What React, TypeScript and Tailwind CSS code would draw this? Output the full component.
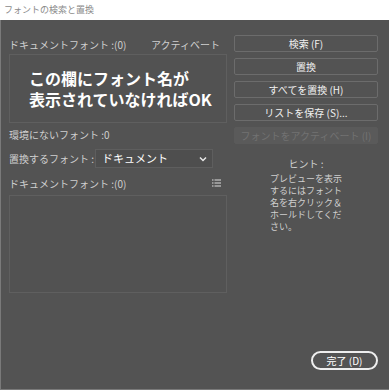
import React from 'react';

const font = { fontFamily: '"Noto Sans CJK JP", "Noto Sans", sans-serif' };

function SideButton({ label, disabled }: { label: string; disabled?: boolean }) {
  return (
    <button
      className={
        disabled
          ? 'h-[17px] w-full whitespace-nowrap rounded-[2px] border border-[#5a5a5a] bg-[#5a5a5a] text-[10px] leading-none text-[#727272]'
          : 'h-[17px] w-full whitespace-nowrap rounded-[2px] border border-[#6c6c6c] bg-[#535353] text-[10px] leading-none text-[#f0f0f0]'
      }
    >
      {label}
    </button>
  );
}

export default function App() {
  return (
    <div className="flex h-[390px] w-[389px] flex-col bg-[#535353]" style={font}>
      {/* Title bar */}
      <div className="flex h-[20px] items-center bg-white px-[4px] text-[9px] text-[#8a8a8a]">
        フォントの検索と置換
      </div>

      <div className="flex flex-1 border-b border-l border-[#7a7a7a]">
        {/* Left column */}
        <div className="flex w-[233px] flex-col pl-[8px] pt-[15px]">
          <div className="flex h-[18px] items-center justify-between whitespace-nowrap pr-[14px] text-[10px] text-[#cfcfcf]">
            <span>ドキュメントフォント :(0)</span>
            <span>アクティベート</span>
          </div>
          <div className="mt-[1px] flex h-[69px] w-[218px] flex-col justify-center whitespace-nowrap border border-[#5f5f5f] bg-[#525252] pl-[19px] text-[16px] font-bold leading-[21px] text-white">
            <span>この欄にフォント名が</span>
            <span>表示されていなければOK</span>
          </div>

          <div className="mt-[2px] flex h-[18px] items-center text-[10px] text-[#cfcfcf]">環境にないフォント :0</div>

          <div className="mt-[6px] flex h-[19px] items-center gap-[1px] whitespace-nowrap text-[10px] text-[#cfcfcf]">
            <span>置換するフォント :</span>
            <div className="flex h-[19px] w-[118px] items-center justify-between border border-[#5e5e5e] bg-[#4e4e4e] pl-[6px] pr-[5px] text-[11px] text-white">
              <span>ドキュメント</span>
              <svg width="8" height="6" viewBox="0 0 8 6">
                <path d="M1 1.5 L4 4.5 L7 1.5" stroke="#e8e8e8" strokeWidth="1.5" fill="none" />
              </svg>
            </div>
          </div>

          <div className="mt-[6px] flex h-[18px] items-center justify-between pr-[13px] text-[10px] text-[#cfcfcf]">
            <span>ドキュメントフォント :(0)</span>
            <svg width="9" height="8" viewBox="0 0 9 8">
              <rect x="0" y="0.5" width="1.5" height="1" fill="#ddd" />
              <rect x="0" y="3.5" width="1.5" height="1" fill="#ddd" />
              <rect x="0" y="6.5" width="1.5" height="1" fill="#ddd" />
              <rect x="2.5" y="0.5" width="6.5" height="1" fill="#ddd" />
              <rect x="2.5" y="3.5" width="6.5" height="1" fill="#ddd" />
              <rect x="2.5" y="6.5" width="6.5" height="1" fill="#ddd" />
            </svg>
          </div>
          <div className="mt-[3px] h-[98px] w-[218px] border border-[#5f5f5f] bg-[#525252]" />
        </div>

        {/* Right column */}
        <div className="flex flex-1 flex-col pr-[11px] pt-[15px]">
          <div className="flex flex-col gap-[6px]">
            <SideButton label="検索 (F)" />
            <SideButton label="置換" />
            <SideButton label="すべてを置換 (H)" />
            <SideButton label="リストを保存 (S)..." />
            <SideButton label="フォントをアクティベート (I)" disabled />
          </div>
          <div className="mt-[12px] text-center text-[10px] text-[#cfcfcf]">ヒント :</div>
          <div className="mt-[2px] flex flex-col self-center whitespace-nowrap text-[9px] leading-[12px] text-[#cfcfcf]">
            <span>プレビューを表示</span>
            <span>するにはフォント</span>
            <span>名を右クリック＆</span>
            <span>ホールドしてくだ</span>
            <span>さい。</span>
          </div>
          <div className="mt-auto mb-[19px] flex justify-end">
            <button className="h-[19px] w-[67px] rounded-full border-2 border-[#eeeeee] text-[10px] leading-none text-white">
              完了 (D)
            </button>
          </div>
        </div>
      </div>
    </div>
  );
}
